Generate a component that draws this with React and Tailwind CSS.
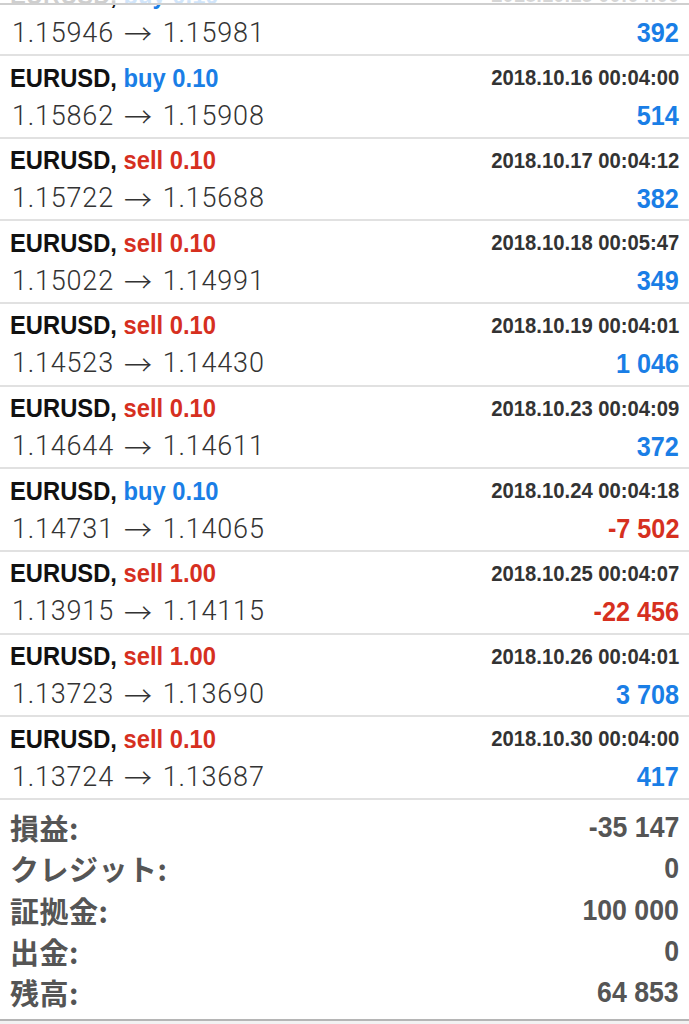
import React from "react";

const trades = [
  { side: "buy", lot: "0.10", date: "2018.10.15 00:04:00", from: "1.15946", to: "1.15981", pl: "392" },
  { side: "buy", lot: "0.10", date: "2018.10.16 00:04:00", from: "1.15862", to: "1.15908", pl: "514" },
  { side: "sell", lot: "0.10", date: "2018.10.17 00:04:12", from: "1.15722", to: "1.15688", pl: "382" },
  { side: "sell", lot: "0.10", date: "2018.10.18 00:05:47", from: "1.15022", to: "1.14991", pl: "349" },
  { side: "sell", lot: "0.10", date: "2018.10.19 00:04:01", from: "1.14523", to: "1.14430", pl: "1 046" },
  { side: "sell", lot: "0.10", date: "2018.10.23 00:04:09", from: "1.14644", to: "1.14611", pl: "372" },
  { side: "buy", lot: "0.10", date: "2018.10.24 00:04:18", from: "1.14731", to: "1.14065", pl: "-7 502" },
  { side: "sell", lot: "1.00", date: "2018.10.25 00:04:07", from: "1.13915", to: "1.14115", pl: "-22 456" },
  { side: "sell", lot: "1.00", date: "2018.10.26 00:04:01", from: "1.13723", to: "1.13690", pl: "3 708" },
  { side: "sell", lot: "0.10", date: "2018.10.30 00:04:00", from: "1.13724", to: "1.13687", pl: "417" },
];

const summary = [
  ["損益:", "-35 147"],
  ["クレジット:", "0"],
  ["証拠金:", "100 000"],
  ["出金:", "0"],
  ["残高:", "64 853"],
];

const sans = { fontFamily: '"Liberation Sans", Arial, sans-serif' };
const light = { fontFamily: 'Roboto, "Liberation Sans", sans-serif' };
const arrow = { fontFamily: '"Noto Sans CJK JP", "DejaVu Sans", sans-serif' };
const jp = { fontFamily: '"Noto Sans CJK JP", sans-serif' };

function Row({ t }) {
  const isBuy = t.side === "buy";
  const neg = t.pl.startsWith("-");
  return (
    <div className="h-[82.67px] border-b-2 border-[#e1e1e1] pl-[10px] pr-[10px] flex flex-col">
      <div className="h-[44px] flex items-center justify-between">
        <div
          className="inline-block origin-left scale-x-[0.95] whitespace-nowrap text-[25px] font-bold leading-none"
          style={sans}
        >
          <span className="text-[#111111]">EURUSD, </span>
          <span className={isBuy ? "text-[#1a7ee6]" : "text-[#d6301f]"}>
            {t.side} {t.lot}
          </span>
        </div>
        <div
          className="inline-block origin-right scale-x-[0.92] whitespace-nowrap text-[22px] font-bold leading-none text-[#333333]"
          style={sans}
        >
          {t.date}
        </div>
      </div>
      <div className="h-[32px] flex items-center justify-between">
        <div
          className="whitespace-nowrap text-[27px] font-light leading-none tracking-[0.8px] text-[#333333] flex items-center pl-[2px]"
          style={light}
        >
          <span>{t.from}</span>
          <span className="mx-[10px] text-[28px] font-light leading-none" style={arrow}>
            →
          </span>
          <span>{t.to}</span>
        </div>
        <div
          className={
            "inline-block origin-right scale-x-[0.9] whitespace-nowrap text-[28px] font-bold leading-none " +
            (neg ? "text-[#d6301f]" : "text-[#1a7ee6]")
          }
          style={sans}
        >
          {t.pl}
        </div>
      </div>
    </div>
  );
}

export default function App() {
  return (
    <div className="relative w-[689px] h-[1024px] overflow-hidden bg-[#f2f2f2]">
      <div className="absolute top-0 left-0 right-0 h-[5px] bg-white/80 border-b-2 border-[#cfcfcf] z-10" />
      <div className="bg-white mt-[-26.67px]">
        {trades.map((t, i) => (
          <Row key={i} t={t} />
        ))}
        <div className="pt-[7px] pb-[6px] pl-[10px] pr-[10px] border-b-2 border-[#b5b5b5]">
          {summary.map(([k, v], i) => (
            <div key={i} className="h-[41.25px] flex items-center justify-between text-[#555555]">
              <div className="text-[29px] font-bold leading-none tracking-[0.5px]" style={jp}>
                {k}
              </div>
              <div
                className="inline-block origin-right scale-x-[0.92] whitespace-nowrap text-[29px] font-bold leading-none"
                style={sans}
              >
                {v}
              </div>
            </div>
          ))}
        </div>
      </div>
    </div>
  );
}
